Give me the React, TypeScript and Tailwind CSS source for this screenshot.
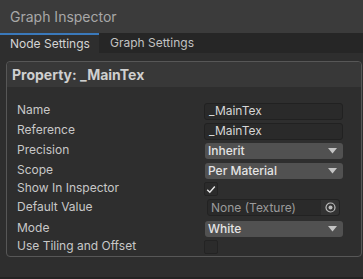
import React from "react";

const Caret = () => (
  <svg width="9" height="6" viewBox="0 0 9 6" className="shrink-0">
    <path d="M0 0 H9 L4.5 5.5 Z" fill="#c4c4c4" />
  </svg>
);

const Check = () => (
  <svg width="10" height="9" viewBox="0 0 10 9">
    <path d="M1.2 4.8 L3.8 7.3 L8.8 1.5" stroke="#e6e6e6" strokeWidth="1.4" fill="none" />
  </svg>
);

function TextField({ value }: { value: string }) {
  return (
    <div className="h-[17px] w-[139px] bg-[#2a2a2a] border border-[#212121] rounded-[3px] flex items-center pl-[4px] text-[12px] text-[#d6d6d6]">
      {value}
    </div>
  );
}

function Dropdown({ value }: { value: string }) {
  return (
    <div className="h-[16px] w-[138px] ml-[1px] bg-[#515151] rounded-[3px] flex items-center justify-between pl-[3px] pr-[6px] text-[12px] font-medium text-[#e4e4e4]">
      <span>{value}</span>
      <Caret />
    </div>
  );
}

function CheckBox({ checked }: { checked?: boolean }) {
  return (
    <div className="w-[14px] h-[14px] bg-[#2b2b2b] border border-[#232323] rounded-[2px] flex items-center justify-center">
      {checked ? <Check /> : null}
    </div>
  );
}

function Row({ label, h, children }: { label: string; h: string; children: React.ReactNode }) {
  return (
    <div className={`flex items-center ${h}`}>
      <div className="w-[187px] text-[12px] text-[#c8c8c8] leading-none pb-[2px]">{label}</div>
      <div className="flex items-center">{children}</div>
    </div>
  );
}

export default function App() {
  return (
    <div
      className="w-[363px] h-[279px] bg-[#2e2e2e] flex flex-col overflow-hidden"
      style={{ fontFamily: "Inter, 'Noto Sans', sans-serif" }}
    >
      <div className="h-[33px] bg-[#3b3b3b] flex items-center pl-[10px] text-[14px] text-[#a8a8a8]">
        Graph Inspector
      </div>
      <div className="h-[20px] flex text-[12px]">
        <div className="w-[99px] border-t-2 border-[#3a79bb] bg-[#2e2e2e] flex items-center pl-[10px] text-[#d4d4d4]">
          Node Settings
        </div>
        <div className="flex-1 bg-[#262626] flex items-center pl-[11px] text-[#c2c2c2]">Graph Settings</div>
      </div>
      <div className="pt-[8px] pl-[6px] pr-[1px]">
        <div className="border border-[#575757] rounded-[4px] flex flex-col">
          <div className="h-[25px] bg-[#383838] rounded-t-[4px] flex items-center pl-[5px] text-[14px] font-bold text-[#cfcfcf]">
            Property: _MainTex
          </div>
          <div className="pt-[14px] pb-[2px] pl-[10px] flex flex-col">
            <Row label="Name" h="h-[20px]">
              <TextField value="_MainTex" />
            </Row>
            <Row label="Reference" h="h-[20px]">
              <TextField value="_MainTex" />
            </Row>
            <Row label="Precision" h="h-[20px]">
              <Dropdown value="Inherit" />
            </Row>
            <Row label="Scope" h="h-[20px]">
              <Dropdown value="Per Material" />
            </Row>
            <Row label="Show In Inspector" h="h-[16px]">
              <CheckBox checked />
            </Row>
            <Row label="Default Value" h="h-[21px]">
              <div className="ml-[3px] h-[17px] w-[133px] bg-[#2a2a2a] border border-[#222222] rounded-[3px] flex items-center text-[12px] text-[#9a9a9a]">
                <span className="flex-1 pl-[3px]">None (Texture)</span>
                <div className="w-[18px] h-full bg-[#333333] rounded-r-[3px] flex items-center justify-center">
                  <svg width="11" height="11" viewBox="0 0 11 11">
                    <circle cx="5.5" cy="5.5" r="4.5" stroke="#bdbdbd" strokeWidth="1.2" fill="none" />
                    <circle cx="5.5" cy="5.5" r="2" fill="#bdbdbd" />
                  </svg>
                </div>
              </div>
            </Row>
            <Row label="Mode" h="h-[21px]">
              <Dropdown value="White" />
            </Row>
            <Row label="Use Tiling and Offset" h="h-[15px]">
              <CheckBox />
            </Row>
          </div>
        </div>
      </div>
      <div className="flex-1" />
      <div className="h-[2px] bg-[#232323]" />
    </div>
  );
}
